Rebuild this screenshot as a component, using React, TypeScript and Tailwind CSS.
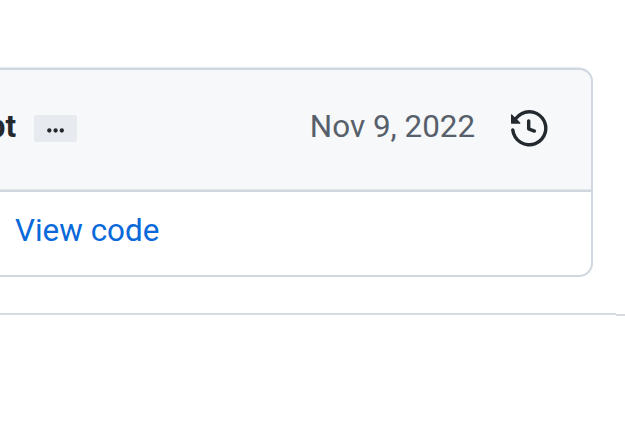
function HistoryIcon() {
  return (
    <svg width="36.5" height="36.5" viewBox="0 0 16 16" fill="currentColor" className="mb-[3.5px] shrink-0" aria-label="History">
      <path
        fillRule="evenodd"
        d="M1.643 3.143L.427 1.927A.25.25 0 000 2.104V5.75c0 .138.112.25.25.25h3.646a.25.25 0 00.177-.427L2.715 4.215a6.5 6.5 0 11-1.18 4.458.75.75 0 10-1.493.154 8.001 8.001 0 101.6-5.684zM7.75 4a.75.75 0 01.75.75v2.992l2.028.812a.75.75 0 01-.557 1.392l-2.5-1A.75.75 0 017 8.25v-3.5A.75.75 0 017.75 4z"
      />
    </svg>
  );
}

function EllipsisButton() {
  return (
    <button className="ml-[18px] mt-[3px] flex h-[27px] w-[43px] items-center justify-center rounded-[2px] bg-[#e7eaee]" aria-label="Toggle commit message">
      <svg width="17" height="5" viewBox="0 0 17 5" fill="currentColor" className="mt-[5px]">
        <circle cx="2.3" cy="2.5" r="2.15" />
        <circle cx="8.6" cy="2.5" r="2.15" />
        <circle cx="14.8" cy="2.5" r="2.15" />
      </svg>
    </button>
  );
}

export default function App() {
  return (
    <main className="h-[421px] w-[625px] overflow-hidden bg-white pt-[68px] font-['Roboto','Liberation_Sans',sans-serif] text-[31.4px] leading-[38px] text-[#24292f]">
      <section className="-ml-10 h-[209px] w-[632.6px] overflow-hidden rounded-[14px] border-2 border-[#d0d7de] shadow-[0_-0.5px_0_0_#d0d7de]">
        <header className="flex h-[122px] items-center justify-between border-b-2 border-[#d0d7de] bg-[#f6f8fa] pr-[43px] shadow-[inset_0_-1px_0_0_#e3e8ed]">
          <div className="mb-[7px] flex items-center">
            <span className="flex w-[54px] justify-end whitespace-nowrap font-bold">pt</span>
            <EllipsisButton />
          </div>
          <div className="flex items-center">
            <time className="mb-[7px] mr-[36px] whitespace-nowrap text-[#57606a]">Nov 9, 2022</time>
            <HistoryIcon />
          </div>
        </header>
        <div className="flex h-[83px] items-center pb-[5px] pl-[53px]">
          <a className="whitespace-nowrap text-[#0969da]">View code</a>
        </div>
      </section>
      <div className="mt-9 flex h-[3px] items-start">
        <div className="h-[2px] flex-1 bg-[#d5dae1]" />
        <div className="mt-px h-[2px] w-[9px] bg-[#d5dae1]" />
      </div>
    </main>
  );
}
